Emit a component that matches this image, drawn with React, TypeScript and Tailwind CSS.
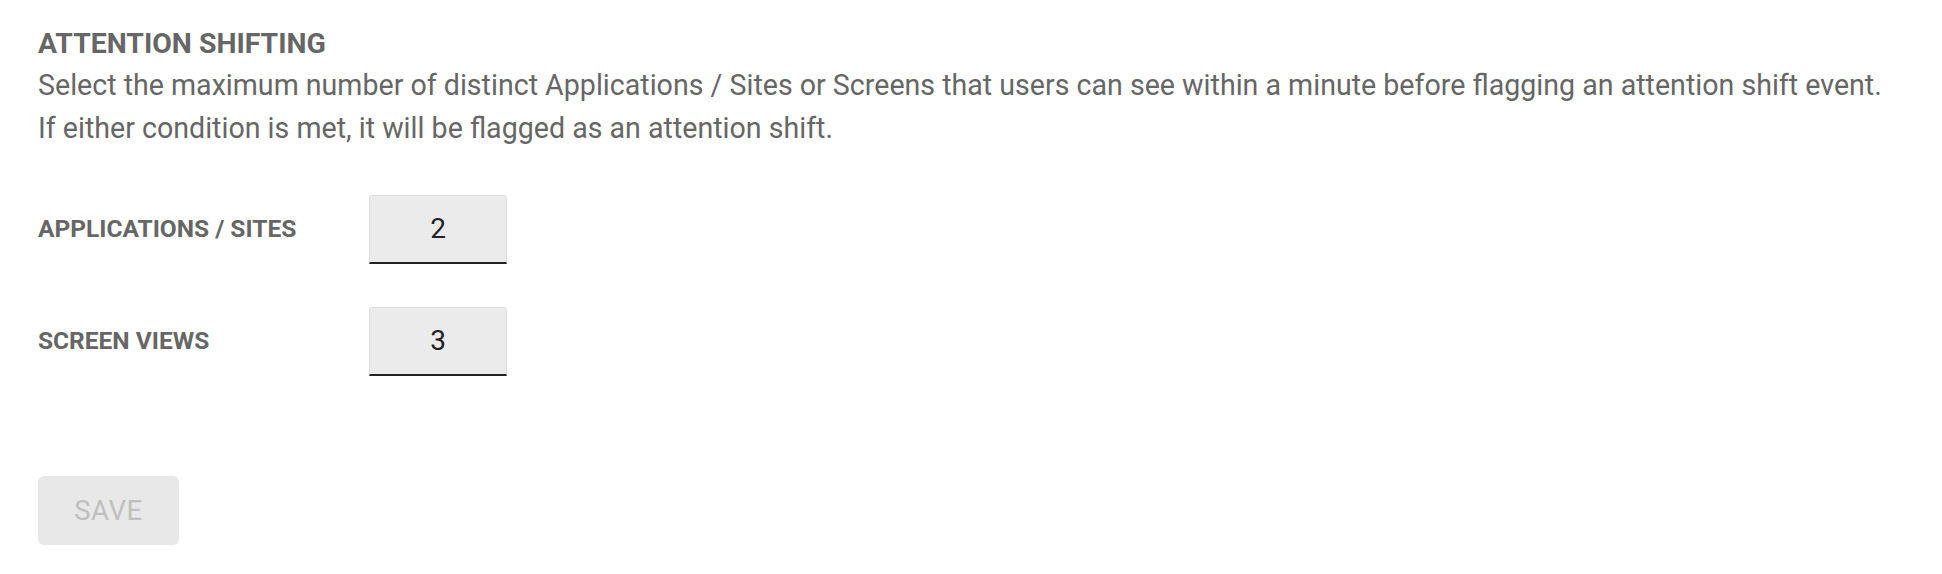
import React from "react";

function NumberField({ label, value }: { label: string; value: string }) {
  return (
    <div className="flex items-center">
      <div className="w-[331px] shrink-0 -translate-y-[1px] text-[24.5px] font-bold leading-[28px] text-[#666666]">
        {label}
      </div>
      <div className="flex h-[69px] w-[138px] items-center justify-center rounded-t-[4px] border border-b-2 border-[#dcdcdc] border-b-[#222222] bg-[#ebebeb] text-[28px] text-[#222222]">
        {value}
      </div>
    </div>
  );
}

export default function App() {
  return (
    <div
      className="min-h-[574px] w-full bg-white pl-[38px] pt-[30px]"
      style={{ fontFamily: "Roboto, 'Noto Sans', Arial, sans-serif" }}
    >
      <h1 className="text-[28.4px] font-bold leading-[28px] text-[#666666]">ATTENTION SHIFTING</h1>
      <p className="mt-[6px] text-[28.6px] leading-[43px] text-[#666666]">
        Select the maximum number of distinct Applications / Sites or Screens that users can see within a minute before flagging an attention shift event.
        <br />
        If either condition is met, it will be flagged as an attention shift.
      </p>
      <div className="mt-[45px] flex flex-col gap-[43px]">
        <NumberField label="APPLICATIONS / SITES" value="2" />
        <NumberField label="SCREEN VIEWS" value="3" />
      </div>
      <button
        disabled
        className="mt-[100px] flex h-[69px] w-[141px] items-center justify-center rounded-[6px] bg-[#e8e8e8] text-[27.5px] tracking-[0.6px] text-[#bfbfbf]"
      >
        SAVE
      </button>
    </div>
  );
}
